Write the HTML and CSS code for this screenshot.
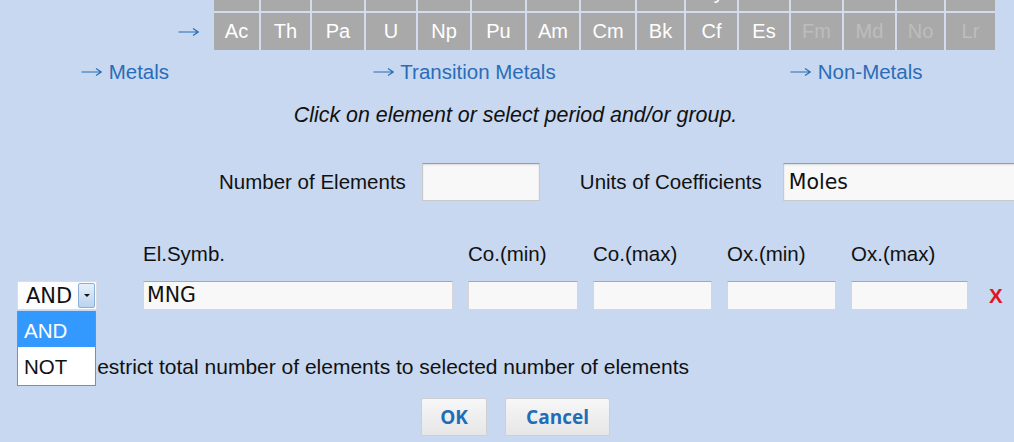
FILE: index.html
```html
<!DOCTYPE html>
<html>
<head>
<meta charset="utf-8">
<link rel="stylesheet" href="styles.css">
</head>
<body>
<div class="pt">
  <div class="pt-arrow"><svg class="arr" viewBox="0 0 21 10" width="21" height="10"><path d="M0.5 5H20M15 1.5L20.3 5L15 8.5"/></svg></div>
  <div class="pt-grid">
    <div class="cell">La</div><div class="cell">Ce</div><div class="cell">Pr</div><div class="cell">Nd</div><div class="cell">Pm</div><div class="cell">Sm</div><div class="cell">Eu</div><div class="cell">Gd</div><div class="cell">Tb</div><div class="cell">Dy</div><div class="cell">Ho</div><div class="cell">Er</div><div class="cell">Tm</div><div class="cell">Yb</div><div class="cell">Lu</div>
    <div class="cell">Ac</div><div class="cell">Th</div><div class="cell">Pa</div><div class="cell">U</div><div class="cell">Np</div><div class="cell">Pu</div><div class="cell">Am</div><div class="cell">Cm</div><div class="cell">Bk</div><div class="cell">Cf</div><div class="cell">Es</div><div class="cell off">Fm</div><div class="cell off">Md</div><div class="cell off">No</div><div class="cell off">Lr</div>
  </div>
</div>

<div class="links">
  <span class="link"><svg class="arr" viewBox="0 0 21 10" width="21" height="10"><path d="M0.5 5H20M15 1.5L20.3 5L15 8.5"/></svg> Metals</span>
  <span class="link"><svg class="arr" viewBox="0 0 21 10" width="21" height="10"><path d="M0.5 5H20M15 1.5L20.3 5L15 8.5"/></svg> Transition Metals</span>
  <span class="link"><svg class="arr" viewBox="0 0 21 10" width="21" height="10"><path d="M0.5 5H20M15 1.5L20.3 5L15 8.5"/></svg> Non-Metals</span>
</div>

<div class="hint">Click on element or select period and/or group.</div>

<div class="counts">
  <span class="label">Number of Elements</span>
  <div class="field num"></div>
  <span class="label units">Units of Coefficients</span>
  <div class="field unit">Moles</div>
</div>

<div class="criteria">
  <div></div>
  <div class="head">El.Symb.</div>
  <div class="head">Co.(min)</div>
  <div class="head">Co.(max)</div>
  <div class="head">Ox.(min)</div>
  <div class="head">Ox.(max)</div>
  <div></div>

  <div class="selwrap">
    <div class="select"><span class="seltext">AND</span><span class="selbtn"><span class="tri"></span></span></div>
    <div class="droplist">
      <div class="opt active">AND</div>
      <div class="opt">NOT</div>
    </div>
  </div>
  <div class="field row">MNG</div>
  <div class="field row"></div>
  <div class="field row"></div>
  <div class="field row"></div>
  <div class="field row"></div>
  <div class="remove">X</div>
</div>

<div class="restrict">
  <span class="check"></span>
  <span>Restrict total number of elements to selected number of elements</span>
</div>

<div class="buttons">
  <div class="btn ok">OK</div>
  <div class="btn cancel">Cancel</div>
</div>
</body>
</html>
```

FILE: styles.css
```css
html, body {
  margin: 0;
  padding: 0;
  background: #c7d8f0;
  font-family: "Liberation Sans", Arial, sans-serif;
  font-size: 20.5px;
  color: #111;
  overflow: hidden;
}

.arr {
  fill: none;
  stroke: currentColor;
  stroke-width: 1.2;
  vertical-align: 2px;
  margin-right: 1px;
}

.pt {
  display: flex;
  margin-top: -26px;
}
.pt-arrow {
  width: 214px;
  box-sizing: border-box;
  padding-right: 14px;
  text-align: right;
  align-self: flex-end;
  height: 37px;
  line-height: 37px;
  color: #2a6cb8;
}
.pt-grid {
  display: grid;
  grid-template-columns: 45px 49px 52px 50px 52px 53px 52px 54px 47px 51px 50px 51px 51px 47px 49px;
  grid-auto-rows: 37px;
  gap: 2px;
  background: #d3dbee;
}
.cell {
  background: #a9a9a9;
  color: #fff;
  text-align: center;
  line-height: 37px;
  font-size: 20px;
}
.cell.off {
  color: #bdbdbd;
}

.links {
  display: grid;
  grid-template-columns: 292px 417px auto;
  padding-left: 81px;
  margin-top: 11px;
  line-height: 22px;
}
.link {
  color: #2b6cb8;
  white-space: nowrap;
}

.hint {
  margin-top: 21px;
  padding-left: 17px;
  text-align: center;
  font-style: italic;
  font-size: 21.4px;
  line-height: 22px;
}

.counts {
  display: flex;
  align-items: center;
  margin-top: 37px;
  padding-left: 219px;
  gap: 16px;
}
.label {
  white-space: nowrap;
  flex: none;
}
.units {
  margin-left: 24px;
  margin-right: 5px;
}

.field {
  box-sizing: border-box;
  background: #f8f8f8;
  border: 1px solid #c9c9c9;
  border-top-color: #9a9a9a;
  box-shadow: inset 0 1px 2px rgba(0, 0, 0, 0.12);
  font-family: "DejaVu Sans", Verdana, sans-serif;
  font-size: 20.5px;
  color: #111;
  padding-left: 5px;
  flex: none;
}
.num {
  width: 118px;
  height: 38px;
}
.unit {
  width: 260px;
  height: 38px;
  line-height: 36px;
}

.criteria {
  display: grid;
  grid-template-columns: 111px 310px 110px 119px 109px 117px auto;
  grid-template-rows: 22px 29px;
  column-gap: 15px;
  row-gap: 16px;
  margin-top: 42px;
  padding-left: 17px;
}
.head {
  line-height: 22px;
  white-space: nowrap;
}
.field.row {
  height: 29px;
  line-height: 27px;
  border-color: #d6d6d6;
  border-top-color: #a8a8a8;
  box-shadow: none;
  padding-left: 3px;
}
.remove {
  color: #e0161b;
  font-weight: bold;
  line-height: 29px;
  padding-left: 6px;
}

.selwrap {
  position: relative;
}
.select {
  box-sizing: border-box;
  width: 80px;
  height: 29px;
  background: #fdfdfd;
  border: 1px solid #dcdcdc;
  display: flex;
  align-items: center;
  justify-content: space-between;
  font-family: "DejaVu Sans", Verdana, sans-serif;
  font-size: 21px;
  padding-left: 8px;
  padding-right: 1px;
}
.selbtn {
  box-sizing: border-box;
  width: 17px;
  height: 25px;
  border: 1px solid #8bb0d8;
  border-radius: 2px;
  background: linear-gradient(#e6f0fb, #b9d3ef);
  display: flex;
  align-items: center;
  justify-content: center;
}
.tri {
  width: 0;
  height: 0;
  border-left: 3px solid transparent;
  border-right: 3px solid transparent;
  border-top: 3px solid #111;
}
.droplist {
  position: absolute;
  left: 0;
  top: 30px;
  width: 79px;
  box-sizing: border-box;
  background: #fff;
  border: 1px solid #8c8c8c;
  border-top: none;
  z-index: 2;
}
.opt {
  height: 38px;
  line-height: 40px;
  padding-left: 6px;
  color: #111;
}
.opt.active {
  height: 36px;
  line-height: 40px;
  background: #3399ff;
  color: #fff;
}

.restrict {
  display: flex;
  align-items: center;
  gap: 8px;
  margin-top: 46px;
  padding-left: 60px;
  line-height: 22px;
  font-size: 21px;
}
.check {
  width: 14px;
  height: 14px;
  box-sizing: border-box;
  border: 1px solid #777;
  background: #fff;
  flex: none;
}

.buttons {
  display: flex;
  gap: 18px;
  margin-top: 20px;
  padding-left: 421px;
}
.btn {
  box-sizing: border-box;
  height: 38px;
  line-height: 36px;
  text-align: center;
  border: 1px solid #cfcfcf;
  border-radius: 2px;
  background: linear-gradient(#f7f7f7, #e6e6e6);
  color: #1f6db8;
  font-family: "Open Sans", "DejaVu Sans", sans-serif;
  font-weight: bold;
  font-size: 19px;
}
.ok {
  width: 66px;
}
.cancel {
  width: 105px;
}
```
